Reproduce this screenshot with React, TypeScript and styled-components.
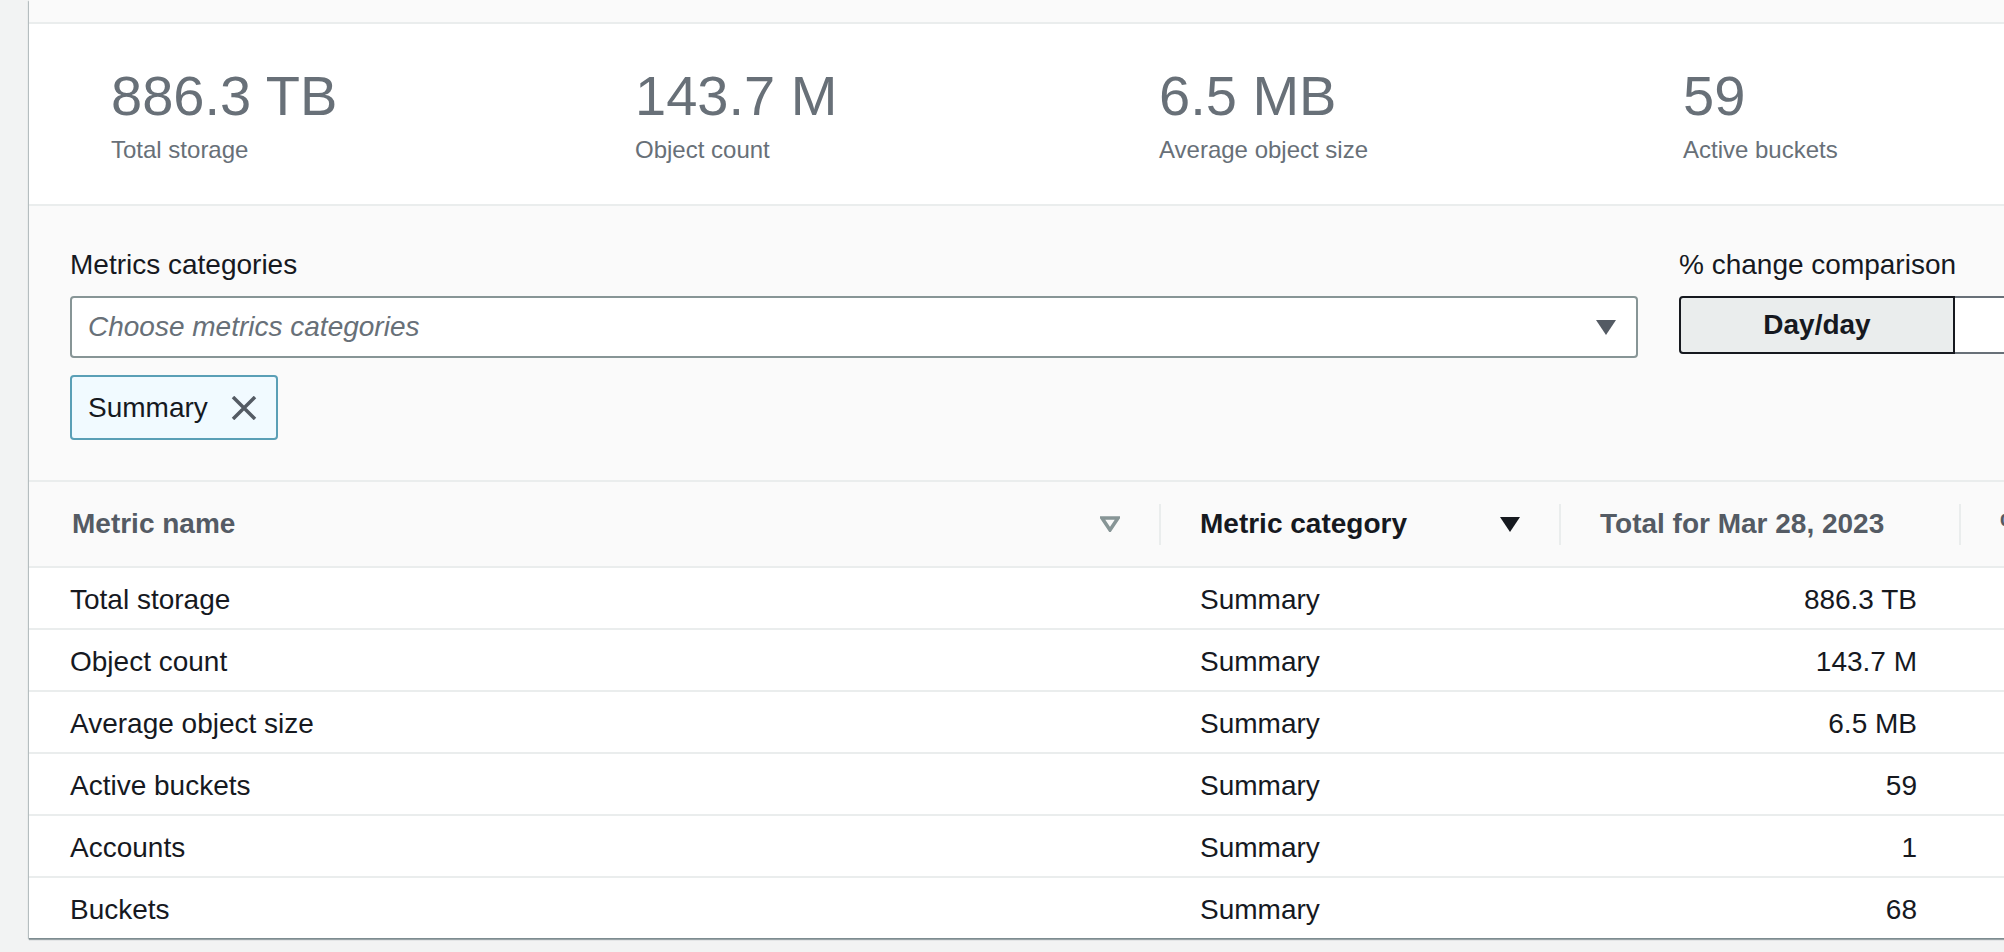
import React from "react";
import styled, { createGlobalStyle } from "styled-components";

const GlobalStyle = createGlobalStyle`
  html, body { margin: 0; padding: 0; background: #f2f3f3; overflow: hidden; }
  body { font-family: "Liberation Sans", Arial, sans-serif; color: #16191f; }
  * { box-sizing: border-box; }
`;

const Page = styled.div`
  width: 2004px;
  height: 952px;
  overflow: hidden;
  padding-left: 29px;
`;

const Panel = styled.div`
  width: 2400px;
  background: #ffffff;
  box-shadow: 0 2px 1px 0 rgba(0, 28, 36, 0.35), -1px 1px 1px 0 rgba(0, 28, 36, 0.2);
`;

const TopBand = styled.div`
  height: 24px;
  background: #fafafa;
  border-bottom: 2px solid #eaeded;
`;

const KpiGrid = styled.div`
  display: grid;
  grid-template-columns: repeat(4, 524px);
  padding: 40px 0 38px 82px;
  background: #ffffff;
  border-bottom: 2px solid #eaeded;
`;

const Kpi = styled.div`
  display: flex;
  flex-direction: column;
  gap: 6px;
`;

const KpiValue = styled.div`
  font-size: 56px;
  line-height: 64px;
  color: #687078;
`;

const KpiLabel = styled.div`
  font-size: 24px;
  line-height: 32px;
  color: #687078;
`;

const FilterSection = styled.div`
  display: grid;
  grid-template-columns: 1568px 600px;
  column-gap: 41px;
  padding: 39px 0 40px 41px;
  background: #fafafa;
`;

const Field = styled.div`
  display: flex;
  flex-direction: column;
  align-items: flex-start;
`;

const FieldLabel = styled.div`
  font-size: 28px;
  line-height: 40px;
  margin-bottom: 11px;
  color: #16191f;
`;

const Select = styled.div`
  width: 100%;
  height: 62px;
  display: flex;
  align-items: center;
  justify-content: space-between;
  padding: 0 20px 0 16px;
  background: #ffffff;
  border: 2px solid #879596;
  border-radius: 4px;
`;

const Placeholder = styled.span`
  font-size: 28px;
  font-style: italic;
  color: #687078;
`;

const Token = styled.div`
  margin-top: 17px;
  height: 65px;
  display: inline-flex;
  align-items: center;
  gap: 23px;
  padding: 0 19px 0 16px;
  background: #f1faff;
  border: 2px solid #5a9fb6;
  border-radius: 4px;
  font-size: 28px;
  color: #16191f;
`;

const Segmented = styled.div`
  display: flex;
`;

const Segment = styled.div<{ $selected?: boolean }>`
  width: 276px;
  height: 58px;
  display: flex;
  align-items: center;
  justify-content: center;
  font-size: 28px;
  font-weight: bold;
  color: #16191f;
  background: ${(p) => (p.$selected ? "#eaeded" : "#ffffff")};
  border: 2px solid ${(p) => (p.$selected ? "#16191f" : "#687078")};
  border-left: ${(p) => (p.$selected ? "2px solid #16191f" : "none")};
  border-radius: ${(p) => (p.$selected ? "4px 0 0 4px" : "0")};
`;

const COLS = "1130px 400px 400px 400px";

const HeaderRow = styled.div`
  display: grid;
  grid-template-columns: ${COLS};
  align-items: center;
  height: 88px;
  background: #fafafa;
  border-top: 2px solid #eaeded;
  border-bottom: 2px solid #eaeded;
`;

const HeaderCell = styled.div<{ $divider?: boolean; $active?: boolean }>`
  height: 41px;
  display: flex;
  align-items: center;
  justify-content: space-between;
  padding: 0 39px 0 ${(p) => (p.$divider ? "39px" : "43px")};
  border-left: ${(p) => (p.$divider ? "2px solid #eaeded" : "none")};
  font-size: 28px;
  font-weight: bold;
  color: ${(p) => (p.$active ? "#16191f" : "#545b64")};
  white-space: nowrap;
`;

const DataRow = styled.div`
  display: grid;
  grid-template-columns: ${COLS};
  align-items: center;
  height: 62px;
  padding-top: 3px;
  border-bottom: 2px solid #eaeded;
  background: #ffffff;
  &:last-child {
    height: 60px;
    border-bottom: none;
  }
`;

const Cell = styled.div<{ $right?: boolean }>`
  display: flex;
  justify-content: ${(p) => (p.$right ? "flex-end" : "flex-start")};
  padding: ${(p) => (p.$right ? "0 42px 0 41px" : "0 41px")};
  font-size: 28px;
  color: #16191f;
  white-space: nowrap;
`;

const Caret = ({ color }: { color: string }) => (
  <svg width="20" height="15" viewBox="0 0 20 15">
    <polygon points="0,0 20,0 10,15" fill={color} />
  </svg>
);

const OutlineCaret = () => (
  <svg width="20" height="16" viewBox="0 0 20 16">
    <polygon points="2,2 18,2 10,14" fill="none" stroke="#879596" strokeWidth="3.5" strokeLinejoin="miter" />
  </svg>
);

const CloseIcon = () => (
  <svg width="26" height="24" viewBox="0 0 26 24">
    <path d="M2 1 L24 23 M24 1 L2 23" stroke="#545b64" strokeWidth="3.5" fill="none" />
  </svg>
);

const kpis = [
  { value: "886.3 TB", label: "Total storage" },
  { value: "143.7 M", label: "Object count" },
  { value: "6.5 MB", label: "Average object size" },
  { value: "59", label: "Active buckets" },
];

const rows = [
  { name: "Total storage", total: "886.3 TB" },
  { name: "Object count", total: "143.7 M" },
  { name: "Average object size", total: "6.5 MB" },
  { name: "Active buckets", total: "59" },
  { name: "Accounts", total: "1" },
  { name: "Buckets", total: "68" },
];

export default function App() {
  return (
    <>
      <GlobalStyle />
      <Page>
        <Panel>
          <TopBand />
          <KpiGrid>
            {kpis.map((k) => (
              <Kpi key={k.label}>
                <KpiValue>{k.value}</KpiValue>
                <KpiLabel>{k.label}</KpiLabel>
              </Kpi>
            ))}
          </KpiGrid>
          <FilterSection>
            <Field>
              <FieldLabel>Metrics categories</FieldLabel>
              <Select>
                <Placeholder>Choose metrics categories</Placeholder>
                <Caret color="#545b64" />
              </Select>
              <Token>
                <span>Summary</span>
                <CloseIcon />
              </Token>
            </Field>
            <Field>
              <FieldLabel>% change comparison</FieldLabel>
              <Segmented>
                <Segment $selected>Day/day</Segment>
                <Segment />
              </Segmented>
            </Field>
          </FilterSection>
          <HeaderRow>
            <HeaderCell>
              <span>Metric name</span>
              <OutlineCaret />
            </HeaderCell>
            <HeaderCell $divider $active>
              <span>Metric category</span>
              <Caret color="#16191f" />
            </HeaderCell>
            <HeaderCell $divider>
              <span>Total for Mar 28, 2023</span>
            </HeaderCell>
            <HeaderCell $divider>
              <span>%</span>
            </HeaderCell>
          </HeaderRow>
          {rows.map((r) => (
            <DataRow key={r.name}>
              <Cell>{r.name}</Cell>
              <Cell>Summary</Cell>
              <Cell $right>{r.total}</Cell>
              <Cell $right />
            </DataRow>
          ))}
        </Panel>
      </Page>
    </>
  );
}
